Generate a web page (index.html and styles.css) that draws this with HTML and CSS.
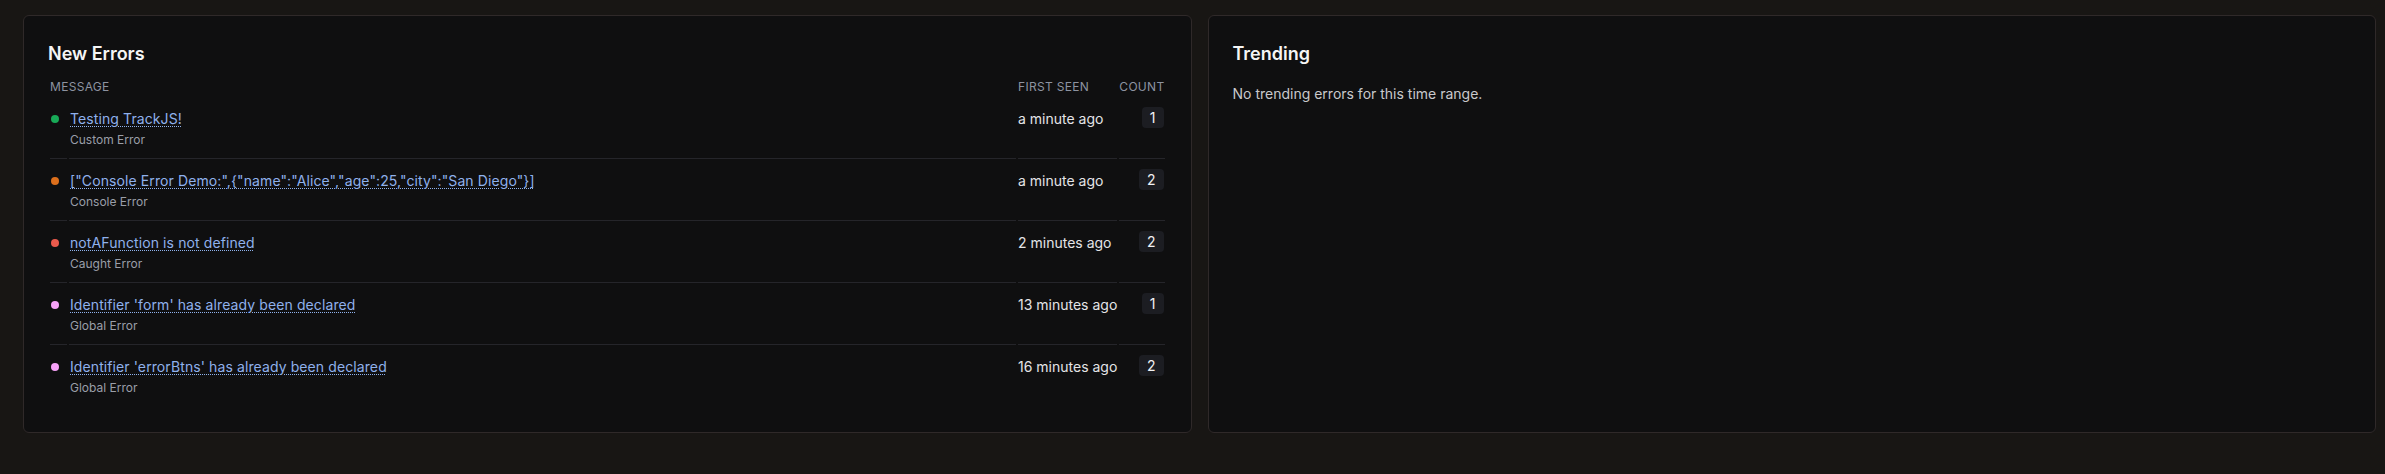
FILE: index.html
```html
<!DOCTYPE html>
<html lang="en">
<head>
<meta charset="utf-8">
<title>Errors</title>
<link rel="stylesheet" href="styles.css">
</head>
<body>
<div class="page">
  <section class="card">
    <h2 class="card-title errors-title">New Errors</h2>
    <table class="errors">
      <thead>
        <tr>
          <th colspan="2" class="col-msg">Message</th>
          <th class="col-seen">First Seen</th>
          <th class="col-count">Count</th>
        </tr>
      </thead>
      <tbody>
        <tr>
          <td class="cell-dot"><div class="dot-wrap"><span class="dot dot-green"></span></div></td>
          <td class="cell-msg"><a class="err-link" href="#">Testing TrackJS!</a><div class="err-type">Custom Error</div></td>
          <td class="cell-seen">a minute ago</td>
          <td class="cell-count"><span class="badge">1</span></td>
        </tr>
        <tr>
          <td class="cell-dot"><div class="dot-wrap"><span class="dot dot-orange"></span></div></td>
          <td class="cell-msg"><a class="err-link" href="#">["Console Error Demo:",{"name":"Alice","age":25,"city":"San Diego"}]</a><div class="err-type">Console Error</div></td>
          <td class="cell-seen">a minute ago</td>
          <td class="cell-count"><span class="badge">2</span></td>
        </tr>
        <tr>
          <td class="cell-dot"><div class="dot-wrap"><span class="dot dot-red"></span></div></td>
          <td class="cell-msg"><a class="err-link" href="#">notAFunction is not defined</a><div class="err-type">Caught Error</div></td>
          <td class="cell-seen">2 minutes ago</td>
          <td class="cell-count"><span class="badge">2</span></td>
        </tr>
        <tr>
          <td class="cell-dot"><div class="dot-wrap"><span class="dot dot-pink"></span></div></td>
          <td class="cell-msg"><a class="err-link" href="#">Identifier 'form' has already been declared</a><div class="err-type">Global Error</div></td>
          <td class="cell-seen">13 minutes ago</td>
          <td class="cell-count"><span class="badge">1</span></td>
        </tr>
        <tr class="last">
          <td class="cell-dot"><div class="dot-wrap"><span class="dot dot-pink"></span></div></td>
          <td class="cell-msg"><a class="err-link" href="#">Identifier 'errorBtns' has already been declared</a><div class="err-type">Global Error</div></td>
          <td class="cell-seen">16 minutes ago</td>
          <td class="cell-count"><span class="badge">2</span></td>
        </tr>
      </tbody>
    </table>
  </section>
  <section class="card">
    <h2 class="card-title trend-title">Trending</h2>
    <p class="empty">No trending errors for this time range.</p>
  </section>
</div>
</body>
</html>
```
FILE: styles.css
```css
html, body {
  margin: 0;
  padding: 0;
}
body {
  background: #181614;
  font-family: Inter, "Noto Sans", sans-serif;
  color: #e5e5e7;
  height: 474px;
  overflow: hidden;
}
.page {
  display: grid;
  grid-template-columns: 1fr 1fr;
  gap: 16px;
  padding: 15px 9px 0 23px;
  align-items: stretch;
}
.card {
  background: #0f0f10;
  border: 1px solid #2f2929;
  border-radius: 6px;
  padding: 24px 24px 25px;
}
.card-title {
  margin: 0;
  font-size: 18px;
  line-height: 28px;
  font-weight: 600;
  color: #f5f5f5;
}
.errors-title {
  margin-bottom: 9px;
}
.trend-title {
  margin-bottom: 16px;
}
.empty {
  margin: 0;
  font-size: 14px;
  line-height: 20px;
  color: #c9c9cc;
}
.errors {
  width: 100%;
  border-collapse: separate;
  border-spacing: 2px 0;
}
.errors th {
  padding: 2px 0;
  font-size: 12px;
  line-height: 16px;
  font-weight: 400;
  text-transform: uppercase;
  letter-spacing: 0.3px;
  color: #8d93a0;
  text-align: left;
  white-space: nowrap;
}
.errors th.col-msg {
  width: 100%;
}
.errors td {
  border-bottom: 1px solid #25252a;
  vertical-align: top;
  padding: 12px 0 10px;
  font-size: 14px;
  line-height: 20px;
}
.errors tr.last td {
  border-bottom-color: transparent;
}
.cell-dot {
  padding-left: 1px !important;
}
.dot-wrap {
  width: 16px;
  height: 20px;
}
.dot {
  display: block;
  width: 8px;
  height: 8px;
  border-radius: 50%;
  margin-top: 6px;
}
.dot-green { background: #18a957; }
.dot-orange { background: #dc6f1c; }
.dot-red { background: #ea5a4c; }
.dot-pink { background: #f7a2f8; }
.cell-msg {
  width: 100%;
  padding-left: 1px !important;
}
.err-link {
  font-size: 14px;
  line-height: 20px;
  letter-spacing: 0.1px;
  color: #8fb1ec;
  text-decoration: underline dotted;
  text-decoration-thickness: 1px;
  text-underline-offset: 2px;
  white-space: nowrap;
}
.err-type {
  margin-top: 3px;
  font-size: 12px;
  line-height: 16px;
  color: #9a9ea8;
}
.cell-seen {
  color: #e4e4e7;
  white-space: nowrap;
}
.cell-count {
  text-align: right;
  white-space: nowrap;
  padding-top: 10px !important;
  padding-right: 1px !important;
}
.badge {
  display: inline-block;
  vertical-align: top;
  padding: 0 8px;
  height: 21px;
  line-height: 21px;
  font-size: 14px;
  color: #f1f1f3;
  background: #1c1d22;
  border-radius: 4px;
  text-align: center;
}
```
